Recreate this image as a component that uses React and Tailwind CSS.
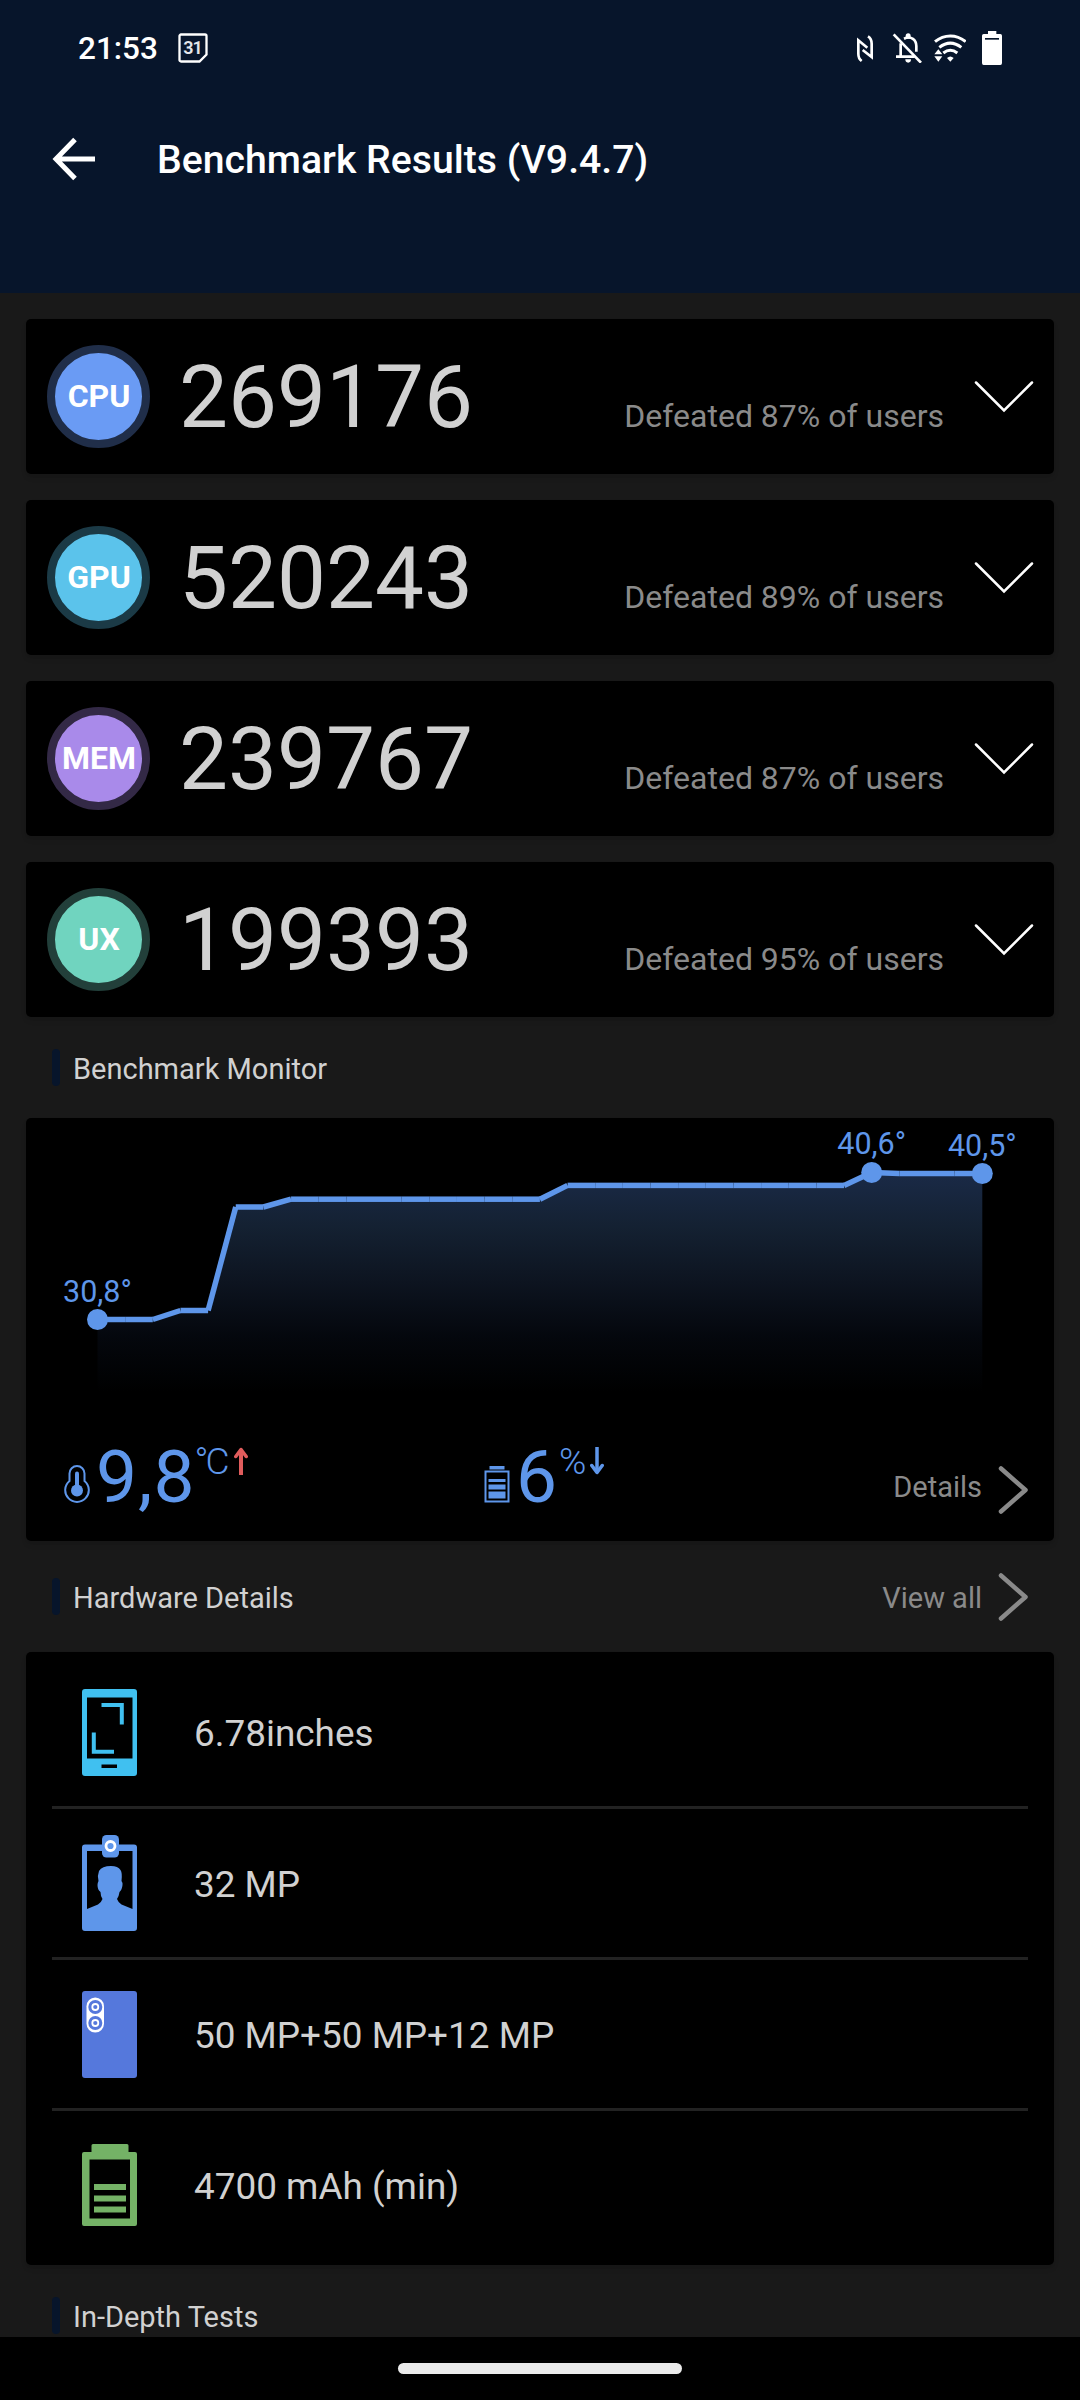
const CalendarIcon = () => (
  <svg width="30" height="30" viewBox="0 0 30 30" fill="none">
    <path
      d="M3 1.500h24a1.500 1.500 0 0 1 1.500 1.500v18.500L21.500 28.500H3A1.500 1.500 0 0 1 1.500 27V3A1.500 1.500 0 0 1 3 1.500z"
      stroke="#fff"
      strokeWidth="2.300"
    />
    <text
      x="14.500"
      y="20.800"
      fill="#e4e7ec"
      fontSize="18"
      fontWeight="600"
      textAnchor="middle"
      letterSpacing="-1"
    >
      31
    </text>
  </svg>
);

const NfcIcon = () => (
  <svg width="18" height="30" viewBox="168 94 54 90" fill="none" stroke="#fff" strokeWidth="8">
    <path d="M185 178C177 172 175 166 175 156V116L202 138" />
    <path d="M204 104C212 109 215 115 215 126V166L188 145" />
  </svg>
);

const BellOffIcon = () => (
  <svg width="30" height="30" viewBox="276 95 90 90" fill="none">
    <path d="M281 99L363 184" stroke="#fff" strokeWidth="8" />
    <path d="M302 126V164M288 166H344" stroke="#fff" strokeWidth="8" />
    <path d="M312 112C334 102 349 116 349 134V151" stroke="#fff" strokeWidth="8" />
    <path d="M317 104a7 8 0 0 1 15 0v8h-15zM316 174h17a8.500 10 0 0 1 -17 0z" fill="#fff" />
  </svg>
);

const WifiIcon = () => (
  <svg width="32" height="30" viewBox="401 95 96 90" fill="none" stroke="#fff" strokeWidth="9">
    <path d="M404 121C432 98 468 98 496 121" />
    <path d="M417 138C438 122 462 122 483 138" />
    <path d="M429 155C443 144 457 144 471 155" />
    <path
      d="M450 181l-10 -11q10 -9 20 0zM402 159l12 -15 12 15zM402 165l12 16 12 -16z"
      fill="#fff"
      stroke="none"
    />
  </svg>
);

const BatteryFullIcon = () => (
  <svg width="20" height="34" viewBox="546 90 60 102">
    <path d="M564 90h25v9h12q5 0 5 5v82q0 6 -5 6h-50q-5 0 -5 -6v-82q0 -5 5 -5h13z" fill="#fff" />
    <path d="M555 111h42v5h-42z" fill="#07152b" />
  </svg>
);

const BackArrow = () => (
  <svg width="44" height="44" viewBox="0 0 44 44" fill="none" stroke="#fff" strokeWidth="5">
    <path d="M23 2.500L4 22L23 41.500M4 22H43" />
  </svg>
);

const ChevronDown = () => (
  <svg
    width="60"
    height="32"
    viewBox="0 0 60 32"
    fill="none"
    stroke="#fff"
    strokeWidth="2.500"
    strokeLinecap="round"
  >
    <path d="M2 1.500L30 29.500L58 1.500" />
  </svg>
);

const ChevronRight = () => (
  <svg
    width="30"
    height="48"
    viewBox="0 0 30 48"
    fill="none"
    stroke="#8a8a8a"
    strokeWidth="4.500"
    strokeLinecap="round"
    strokeLinejoin="round"
  >
    <path d="M3 2.500L27.500 24L3 45.500" />
  </svg>
);

const ThermometerIcon = () => (
  <svg width="26" height="38" viewBox="0 0 26 38" fill="none" stroke="#5e96ea">
    <path d="M5.500 16V8.500a7.500 7.500 0 0 1 15 0V16a11.800 11.800 0 1 1 -15 0z" strokeWidth="2" />
    <path d="M13 8.500V24" strokeWidth="4" strokeLinecap="round" />
    <circle cx="13" cy="25.500" r="6" fill="#5e96ea" stroke="none" />
  </svg>
);

const BatteryLevelIcon = () => (
  <svg width="26" height="38" viewBox="0 0 26 38" fill="#5e96ea">
    <path d="M5.500 1h15v3.500h-15z" />
    <path d="M1.500 6.500h23v30h-23z" fill="none" stroke="#5e96ea" strokeWidth="2" />
    <path d="M4.500 14h17v3h-17zM4.500 19.500h17v5h-17zM4.500 26.500h17v7h-17z" />
  </svg>
);

const ArrowUp = () => (
  <svg width="14" height="28" viewBox="0 0 14 28" fill="none" stroke="#e05c5c">
    <path d="M7 2V28" strokeWidth="4" />
    <path d="M1.800 9.500L7 2.500L12.200 9.500" strokeWidth="3.500" strokeLinecap="round" strokeLinejoin="round" />
  </svg>
);

const ArrowDown = () => (
  <svg width="14" height="28" viewBox="0 0 14 28" fill="none" stroke="#5e96ea">
    <path d="M7 0V26" strokeWidth="3.500" />
    <path d="M1.800 18.500L7 25.500L12.200 18.500" strokeWidth="3.500" strokeLinecap="round" strokeLinejoin="round" />
  </svg>
);

const ScreenIcon = () => (
  <svg width="55" height="87" viewBox="0 0 55 87">
    <path
      fillRule="evenodd"
      d="M3 0h49a3 3 0 0 1 3 3v81a3 3 0 0 1 -3 3H3a3 3 0 0 1 -3 -3V3a3 3 0 0 1 3 -3zM5 8.500V69.500H50.500V8.500zM19.500 75.500V79H35V75.500z"
      fill="#40c0f0"
    />
    <path d="M19.500 16H39.800V35.500M11.800 43.500V62.800H32" fill="none" stroke="#40c0f0" strokeWidth="4" />
  </svg>
);

const FrontCameraIcon = () => (
  <svg width="55" height="96" viewBox="0 0 55 96">
    <path
      fillRule="evenodd"
      d="M3 9.500h49a3 3 0 0 1 3 3v80.500a3 3 0 0 1 -3 3H3a3 3 0 0 1 -3 -3V12.500a3 3 0 0 1 3 -3zM5 16V74L16 69.500Q19 68 20.500 64Q18.500 61 18.500 57Q15.500 55 15.500 50Q15.500 48 16.500 46Q15 41 17 36Q20 31 29 31Q36 31 38.500 35Q40.500 38 39.500 46Q41 48 40.500 50Q40 55 37.500 57Q37 61 35 64Q36.500 68 39.500 69.500L50.500 74V16z"
      fill="#5e96ea"
    />
    <rect x="20" y="0" width="17" height="22.500" rx="4.500" fill="#5e96ea" />
    <circle cx="28.500" cy="11" r="4.500" fill="none" stroke="#fff" strokeWidth="2.800" />
  </svg>
);

const RearCameraIcon = () => (
  <svg width="55" height="87" viewBox="0 0 55 87" fill="none">
    <rect width="55" height="87" rx="3" fill="#5578dc" />
    <rect x="4.500" y="6.500" width="17.500" height="35" rx="8.700" fill="#fff" />
    <circle cx="13.300" cy="16" r="7" fill="#5578dc" />
    <circle cx="13.300" cy="32" r="7" fill="#5578dc" />
    <circle cx="13.300" cy="16" r="3" stroke="#fff" strokeWidth="1.800" />
    <circle cx="13.300" cy="32" r="3" stroke="#fff" strokeWidth="1.800" />
  </svg>
);

const BatteryIcon = () => (
  <svg width="55" height="82" viewBox="0 0 55 82" fill="#74b266">
    <path
      fillRule="evenodd"
      d="M11 0h34a1.500 1.500 0 0 1 1.500 1.500V8H53a2 2 0 0 1 2 2v70a2 2 0 0 1 -2 2H2a2 2 0 0 1 -2 -2V10a2 2 0 0 1 2 -2h7.500V1.500a1.500 1.500 0 0 1 1.500 -1.500zM7.500 15.500V74.500H48V15.500z"
    />
    <path d="M12 40h32v6H12zM12 51.500h32v6H12zM12 62.500h32v6H12z" />
  </svg>
);

const scores = [
  { name: "CPU", score: "269176", percent: 87, badge: "bg-[#6a9bf4] border-[#202e49]" },
  { name: "GPU", score: "520243", percent: 89, badge: "bg-[#5bc3eb] border-[#1b3a46]" },
  { name: "MEM", score: "239767", percent: 87, badge: "bg-[#a98aea] border-[#332946]" },
  { name: "UX", score: "199393", percent: 95, badge: "bg-[#70d4bf] border-[#223f3a]" },
];

const hardware = [
  { label: "6.78inches", icon: <ScreenIcon /> },
  { label: "32 MP", icon: <FrontCameraIcon /> },
  { label: "50 MP+50 MP+12 MP", icon: <RearCameraIcon /> },
  { label: "4700 mAh (min)", icon: <BatteryIcon /> },
];

// y of each temperature sample, left to right
const samples = [
  201.5, 201.5, 201.5, 192.5, 192.5, 89, 89,
  ...Array(10).fill(81.2),
  ...Array(11).fill(67.4),
  54.5, 55.5, 55.5, 55.5, 55.5,
];

const STEP = 27.65;
const points = samples.map((y, i) => [71.5 + i * STEP, y]);

const markers = [
  { index: 0, label: "30,8°", y: 184 },
  { index: 28, label: "40,6°", y: 36 },
  { index: 32, label: "40,5°", y: 38 },
];

const TemperatureChart = () => (
  <svg width="1028" height="300" viewBox="0 0 1028 300" className="block">
    <defs>
      <linearGradient id="area" gradientUnits="userSpaceOnUse" x1="0" y1="54" x2="0" y2="274">
        <stop offset="0" stopColor="#1a2a47" />
        <stop offset="0.25" stopColor="#142132" />
        <stop offset="0.5" stopColor="#0d1420" />
        <stop offset="0.75" stopColor="#04070d" />
        <stop offset="1" stopColor="#000" />
      </linearGradient>
    </defs>
    <path
      d={`M71.5 274L${points.map((p) => p.join(" ")).join("L")}V274z`}
      fill="url(#area)"
    />
    {points.slice(1).map(([x, y], i) => (
      <line
        key={x}
        x1={points[i][0]}
        y1={points[i][1]}
        x2={x}
        y2={y}
        stroke="#5e96ea"
        strokeWidth="5.500"
      />
    ))}
    {markers.map(({ index, label, y }) => (
      <g key={label} fill="#5e96ea">
        <circle cx={points[index][0]} cy={points[index][1]} r="10.500" />
        <text x={points[index][0]} y={y} fontSize="30.500" textAnchor="middle">
          {label}
        </text>
      </g>
    ))}
  </svg>
);

const SectionTitle = ({ children }) => (
  <div className="flex items-center">
    <span className="w-2 h-[37px] rounded bg-[#07152b]" />
    <h2 className="ml-[13px] pt-[3px] text-[29px] leading-9 text-[#d1d1d1]">{children}</h2>
  </div>
);

const App = () => {
  return (
    <div className="w-[1080px] h-[2400px] flex flex-col overflow-hidden bg-[#191919] font-[Roboto,sans-serif]">
      <header className="h-[293px] shrink-0 bg-[#07152b] text-white">
        <div className="h-24 pl-[78px] pr-[78px] flex items-center justify-between">
          <div className="flex items-center">
            <span className="pt-px text-[31.500px] leading-9 font-medium">21:53</span>
            <span className="ml-5">
              <CalendarIcon />
            </span>
          </div>
          <div className="flex items-center">
            <NfcIcon />
            <span className="ml-[18px]">
              <BellOffIcon />
            </span>
            <span className="ml-3">
              <WifiIcon />
            </span>
            <span className="ml-4">
              <BatteryFullIcon />
            </span>
          </div>
        </div>
        <div className="h-[126px] pl-[52px] flex items-center">
          <BackArrow />
          <h1 className="ml-[61px] pt-px text-[39.200px] leading-[48px] font-medium">
            Benchmark Results (V9.4.7)
          </h1>
        </div>
      </header>

      <main className="flex-1 min-h-0 overflow-hidden px-[26px] pt-[26px]">
        <section className="flex flex-col gap-[26px]">
          {scores.map((item) => (
            <div
              key={item.name}
              className="h-[155px] pl-[21px] pr-5 flex items-center rounded-[5px] bg-black shadow-md"
            >
              <div
                className={`size-[103px] shrink-0 pb-px pl-px flex items-center justify-center rounded-full border-8 text-[32px] leading-9 font-bold text-white ${item.badge}`}
              >
                {item.name}
              </div>
              <div className="flex-1 ml-[29px] mr-[30px] flex items-baseline justify-between">
                <span className="text-[87.200px] leading-[100px] text-[#d1d1d1]">{item.score}</span>
                <span className="text-[32px] text-[#8a8a8a]">
                  Defeated {item.percent}% of users
                </span>
              </div>
              <ChevronDown />
            </div>
          ))}
        </section>

        <div className="h-[101px] pl-[26px] flex items-center">
          <SectionTitle>Benchmark Monitor</SectionTitle>
        </div>

        <section className="h-[423px] rounded-[5px] bg-black shadow-md text-[#5e96ea]">
          <TemperatureChart />
          <div className="h-[123px] pl-[38px] pr-[26px] flex items-start">
            <div className="w-[420px] flex items-start">
              <span className="mt-[47px]">
                <ThermometerIcon />
              </span>
              <span className="ml-[6px] mt-[22px] text-[73px] leading-[74px] tracking-[1px]">
                9,8
              </span>
              <span className="-ml-px mt-[26px] text-[37px] leading-9 font-light tracking-[-3px]">
                °C
              </span>
              <span className="ml-2 mt-[29px]">
                <ArrowUp />
              </span>
            </div>
            <div className="flex items-start">
              <span className="mt-[47px]">
                <BatteryLevelIcon />
              </span>
              <span className="ml-[6px] mt-[22px] text-[73px] leading-[74px]">6</span>
              <span className="ml-[2px] mt-[26px] text-[37px] leading-9 font-light">%</span>
              <span className="ml-1 mt-[29px]">
                <ArrowDown />
              </span>
            </div>
            <button className="ml-auto flex items-start text-[29px] leading-9 text-[#8a8a8a]">
              <span className="mt-[51px]">Details</span>
              <span className="ml-4 mt-12">
                <ChevronRight />
              </span>
            </button>
          </div>
        </section>

        <div className="h-[111px] pl-[26px] pr-[26px] flex items-center justify-between">
          <SectionTitle>Hardware Details</SectionTitle>
          <button className="flex items-center text-[29px] leading-9 text-[#8a8a8a]">
            <span className="pt-[3px]">View all</span>
            <span className="ml-4">
              <ChevronRight />
            </span>
          </button>
        </div>

        <section className="h-[613px] px-[26px] py-[6px] rounded-[5px] bg-black shadow-md divide-y-[3px] divide-[#222]">
          {hardware.map((item) => (
            <div key={item.label} className="h-[151px] last:h-[148px] pl-[30px] flex items-center">
              {item.icon}
              <span className="ml-[57px] pt-[3px] text-[36.900px] leading-[44px] text-[#d1d1d1]">
                {item.label}
              </span>
            </div>
          ))}
        </section>

        <div className="h-[101px] pl-[26px] flex items-center">
          <SectionTitle>In-Depth Tests</SectionTitle>
        </div>
      </main>

      <footer className="h-[63px] shrink-0 pt-[26px] flex justify-center items-start bg-black">
        <div className="w-[284px] h-[11px] rounded-full bg-[#ebebeb]" />
      </footer>
    </div>
  );
};

export default App;
